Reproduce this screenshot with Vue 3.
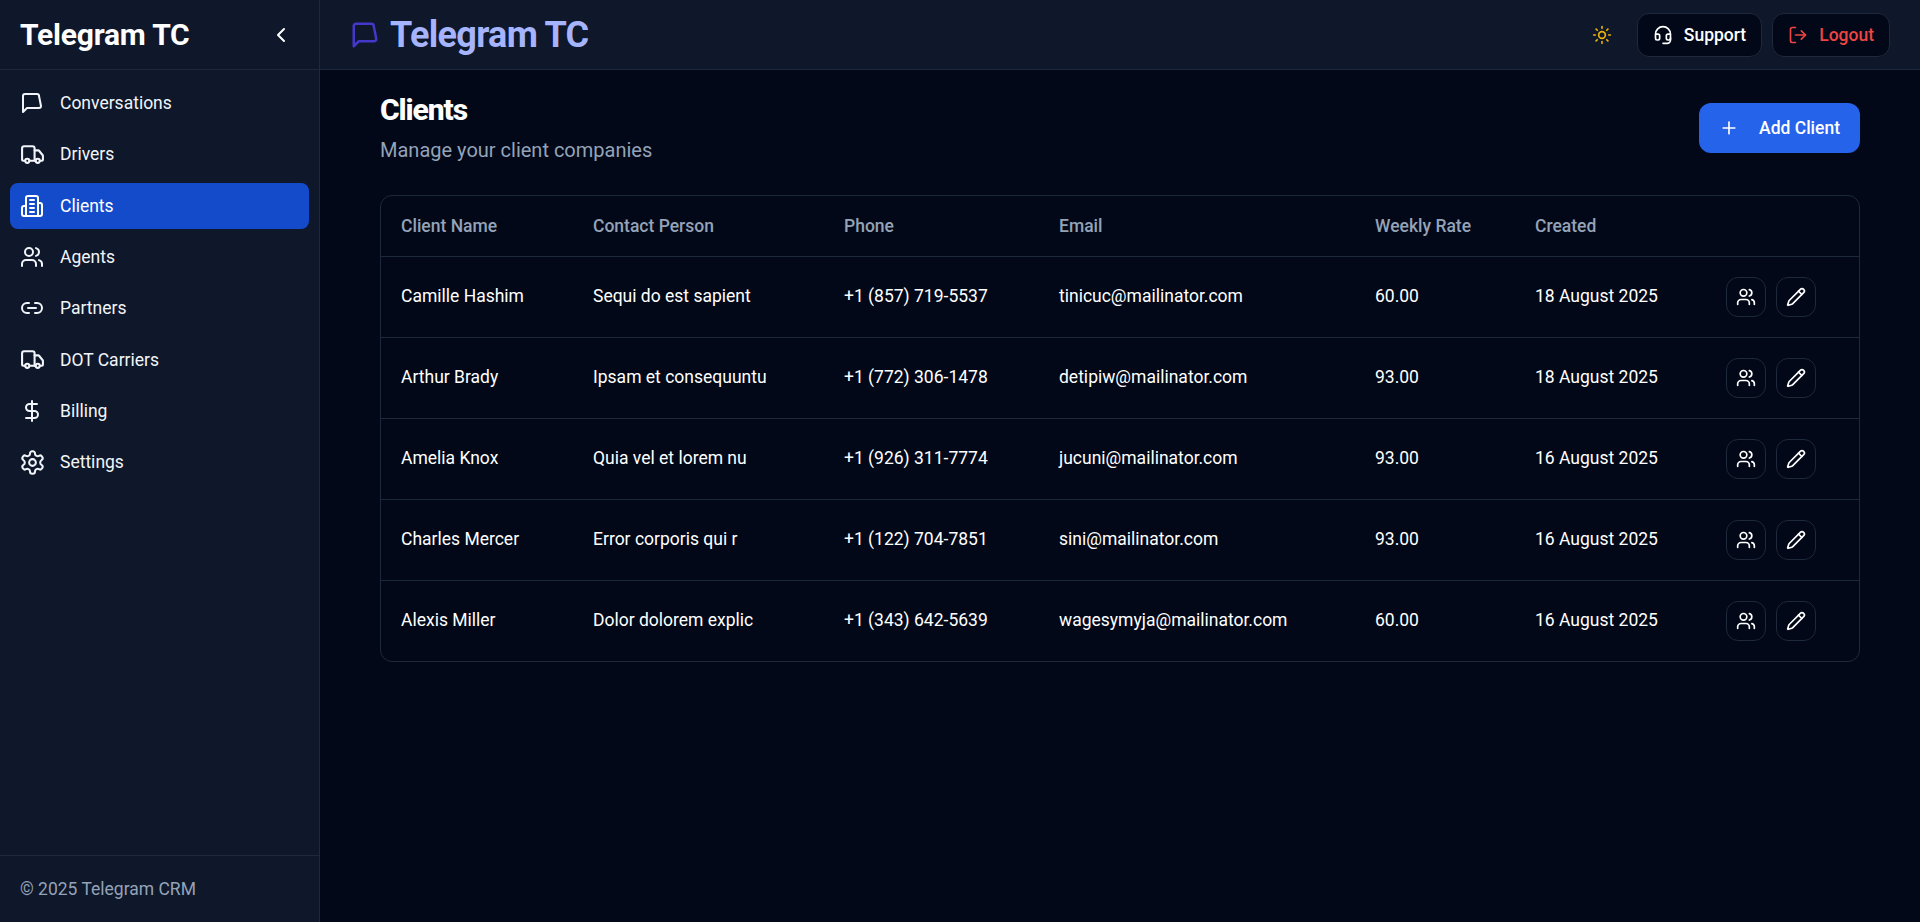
<script setup>
import { h } from 'vue'

const circle = (cx, cy, r) => `M${cx - r} ${cy}a${r} ${r} 0 1 0 ${2 * r} 0a${r} ${r} 0 1 0 ${-2 * r} 0`
const paths = {
  message: ['M21 15a2 2 0 0 1-2 2H7l-4 4V5a2 2 0 0 1 2-2h12a2 2 0 0 1 2 2z'],
  truck: ['M14 18V6a2 2 0 0 0-2-2H4a2 2 0 0 0-2 2v11a1 1 0 0 0 1 1h2', 'M15 18H9', 'M19 18h2a1 1 0 0 0 1-1v-3.65a1 1 0 0 0-.22-.624l-3.48-4.35A1 1 0 0 0 17.52 8H14', circle(17, 18, 2), circle(7, 18, 2)],
  building: ['M6 22V4a2 2 0 0 1 2-2h8a2 2 0 0 1 2 2v18Z', 'M6 12H4a2 2 0 0 0-2 2v6a2 2 0 0 0 2 2h2', 'M18 9h2a2 2 0 0 1 2 2v9a2 2 0 0 1-2 2h-2', 'M10 6h4', 'M10 10h4', 'M10 14h4', 'M10 18h4'],
  users: ['M16 21v-2a4 4 0 0 0-4-4H6a4 4 0 0 0-4 4v2', circle(9, 7, 4), 'M22 21v-2a4 4 0 0 0-3-3.87', 'M16 3.13a4 4 0 0 1 0 7.75'],
  link: ['M9 17H7A5 5 0 0 1 7 7h2', 'M15 7h2a5 5 0 1 1 0 10h-2', 'M8 12h8'],
  dollar: ['M12 2v20', 'M17 5H9.5a3.5 3.5 0 0 0 0 7h5a3.5 3.5 0 0 1 0 7H6'],
  settings: ['M12.22 2h-.44a2 2 0 0 0-2 2v.18a2 2 0 0 1-1 1.73l-.43.25a2 2 0 0 1-2 0l-.15-.08a2 2 0 0 0-2.73.73l-.22.38a2 2 0 0 0 .73 2.73l.15.1a2 2 0 0 1 1 1.72v.51a2 2 0 0 1-1 1.74l-.15.09a2 2 0 0 0-.73 2.73l.22.38a2 2 0 0 0 2.73.73l.15-.08a2 2 0 0 1 2 0l.43.25a2 2 0 0 1 1 1.73V20a2 2 0 0 0 2 2h.44a2 2 0 0 0 2-2v-.18a2 2 0 0 1 1-1.73l.43-.25a2 2 0 0 1 2 0l.15.08a2 2 0 0 0 2.73-.73l.22-.39a2 2 0 0 0-.73-2.73l-.15-.08a2 2 0 0 1-1-1.74v-.5a2 2 0 0 1 1-1.74l.15-.09a2 2 0 0 0 .73-2.73l-.22-.38a2 2 0 0 0-2.73-.73l-.15.08a2 2 0 0 1-2 0l-.43-.25a2 2 0 0 1-1-1.73V4a2 2 0 0 0-2-2z', circle(12, 12, 3)],
  headset: ['M3 11h3a2 2 0 0 1 2 2v3a2 2 0 0 1-2 2H5a2 2 0 0 1-2-2v-5Zm0 0a9 9 0 1 1 18 0m0 0v5a2 2 0 0 1-2 2h-1a2 2 0 0 1-2-2v-3a2 2 0 0 1 2-2h3Z', 'M21 16v2a4 4 0 0 1-4 4h-5'],
  logout: ['M9 21H5a2 2 0 0 1-2-2V5a2 2 0 0 1 2-2h4', 'M16 17l5-5-5-5', 'M21 12H9'],
  sun: [circle(12, 12, 4), 'M12 2v2', 'M12 20v2', 'm4.93 4.93 1.41 1.41', 'm17.66 17.66 1.41 1.41', 'M2 12h2', 'M20 12h2', 'm6.34 17.66-1.41 1.41', 'm19.07 4.93-1.41 1.41'],
  pencil: ['M21.174 6.812a1 1 0 0 0-3.986-3.987L3.842 16.174a2 2 0 0 0-.5.83l-1.321 4.352a.5.5 0 0 0 .623.622l4.353-1.32a2 2 0 0 0 .83-.497z', 'm15 5 4 4'],
  plus: ['M5 12h14', 'M12 5v14'],
  chevron: ['m15 18-6-6 6-6'],
}

const Icon = (props) =>
  h('svg', {
    width: props.size || 24, height: props.size || 24, viewBox: '0 0 24 24', fill: 'none',
    stroke: 'currentColor', 'stroke-width': props.sw || 2, 'stroke-linecap': 'round', 'stroke-linejoin': 'round',
    style: { flex: 'none', display: 'block' },
  }, paths[props.name].map((d) => h('path', { d })))
Icon.props = ['name', 'size', 'sw']

const nav = [
  { label: 'Conversations', icon: 'message', size: 24 },
  { label: 'Drivers', icon: 'truck', size: 25 },
  { label: 'Clients', icon: 'building', size: 24, active: true },
  { label: 'Agents', icon: 'users', size: 24 },
  { label: 'Partners', icon: 'link', size: 24 },
  { label: 'DOT Carriers', icon: 'truck', size: 25 },
  { label: 'Billing', icon: 'dollar', size: 24 },
  { label: 'Settings', icon: 'settings', size: 27, sw: 1.8 },
]

const columns = [
  { label: 'Client Name', width: 192 },
  { label: 'Contact Person', width: 251 },
  { label: 'Phone', width: 215 },
  { label: 'Email', width: 316 },
  { label: 'Weekly Rate', width: 160 },
  { label: 'Created', width: 191 },
  { label: '', width: 153 },
]

const rows = [
  ['Camille Hashim', 'Sequi do est sapient', '+1 (857) 719-5537', 'tinicuc@mailinator.com', '60.00', '18 August 2025'],
  ['Arthur Brady', 'Ipsam et consequuntu', '+1 (772) 306-1478', 'detipiw@mailinator.com', '93.00', '18 August 2025'],
  ['Amelia Knox', 'Quia vel et lorem nu', '+1 (926) 311-7774', 'jucuni@mailinator.com', '93.00', '16 August 2025'],
  ['Charles Mercer', 'Error corporis qui r', '+1 (122) 704-7851', 'sini@mailinator.com', '93.00', '16 August 2025'],
  ['Alexis Miller', 'Dolor dolorem explic', '+1 (343) 642-5639', 'wagesymyja@mailinator.com', '60.00', '16 August 2025'],
]
</script>

<template>
  <div class="app">
    <aside class="sidebar">
      <div class="side-head">
        <span class="side-title">Telegram TC</span>
        <button class="collapse"><Icon name="chevron" :size="24" /></button>
      </div>
      <nav class="nav">
        <a v-for="item in nav" :key="item.label" class="nav-item" :class="{ active: item.active }">
          <span class="nav-icon"><Icon :name="item.icon" :size="item.size" :sw="item.sw" /></span>
          <span>{{ item.label }}</span>
        </a>
      </nav>
      <div class="side-foot">© 2025 Telegram CRM</div>
    </aside>

    <div class="main">
      <header class="topbar">
        <div class="brand">
          <Icon class="brand-icon" name="message" :size="30" />
          <span class="brand-text">Telegram TC</span>
        </div>
        <div class="top-actions">
          <span class="sun"><Icon name="sun" :size="20" /></span>
          <button class="top-btn"><Icon name="headset" :size="20" /><span>Support</span></button>
          <button class="top-btn logout"><Icon name="logout" :size="20" /><span>Logout</span></button>
        </div>
      </header>

      <main class="content">
        <div class="page-head">
          <div>
            <h1>Clients</h1>
            <p>Manage your client companies</p>
          </div>
          <button class="add-btn"><Icon name="plus" :size="20" /><span>Add Client</span></button>
        </div>

        <div class="table-wrap">
          <table>
            <colgroup>
              <col v-for="c in columns" :key="c.label" :style="{ width: c.width + 'px' }" />
            </colgroup>
            <thead>
              <tr><th v-for="c in columns" :key="c.label">{{ c.label }}</th></tr>
            </thead>
            <tbody>
              <tr v-for="row in rows" :key="row[0]">
                <td v-for="cell in row" :key="cell" class="text-cell">{{ cell }}</td>
                <td>
                  <div class="row-actions">
                    <button class="icon-btn"><Icon name="users" :size="20" /></button>
                    <button class="icon-btn"><Icon name="pencil" :size="20" /></button>
                  </div>
                </td>
              </tr>
            </tbody>
          </table>
        </div>
      </main>
    </div>
  </div>
</template>

<style>
html, body { margin: 0; background: #020817; }
</style>

<style scoped>
.app {
  display: flex;
  height: 922px;
  overflow: hidden;
  background: #020817;
  color: #fff;
  font-family: Roboto, "Liberation Sans", sans-serif;
  font-size: 17.5px;
}
button { font-family: inherit; cursor: pointer; }

.sidebar {
  width: 320px;
  flex: none;
  display: flex;
  flex-direction: column;
  background: #0f172a;
  border-right: 1px solid #1e293b;
  box-sizing: border-box;
}
.side-head {
  height: 70px;
  box-sizing: border-box;
  border-bottom: 1px solid #1e293b;
  display: flex;
  align-items: center;
  justify-content: space-between;
  padding: 0 18px 0 20px;
}
.side-title { font-size: 30px; font-weight: 700; letter-spacing: -0.2px; }
.collapse {
  background: none;
  border: 0;
  padding: 0;
  color: #fff;
  width: 40px;
  height: 40px;
  display: flex;
  align-items: center;
  justify-content: center;
}
.nav {
  flex: 1;
  display: flex;
  flex-direction: column;
  gap: 5px;
  padding: 10px;
}
.nav-item {
  height: 46.3px;
  display: flex;
  align-items: center;
  gap: 16px;
  padding: 0 10px;
  border-radius: 8px;
  color: #f1f5f9;
}
.nav-item.active { background: #134bcb; color: #fff; }
.nav-icon {
  width: 24px;
  height: 24px;
  flex: none;
  display: flex;
  align-items: center;
  justify-content: center;
}
.side-foot {
  height: 67px;
  box-sizing: border-box;
  border-top: 1px solid #1e293b;
  padding: 0 20px;
  display: flex;
  align-items: center;
  color: #94a3b8;
}

.main { flex: 1; min-width: 0; display: flex; flex-direction: column; }
.topbar {
  height: 70px;
  box-sizing: border-box;
  flex: none;
  background: #0f172a;
  border-bottom: 1px solid #1e293b;
  display: flex;
  align-items: center;
  justify-content: space-between;
  padding: 0 30px;
}
.brand { display: flex; align-items: center; gap: 10px; }
.brand-icon { color: #4338ca; }
.brand-text { font-size: 36px; font-weight: 700; color: #a5b4fc; letter-spacing: -0.7px; }
.top-actions { display: flex; align-items: center; gap: 10px; }
.sun { color: #eab308; width: 50px; display: flex; justify-content: center; }
.top-btn {
  height: 44px;
  display: flex;
  align-items: center;
  gap: 11px;
  padding: 0 15px;
  background: #020817;
  border: 1px solid #1e293b;
  border-radius: 12px;
  color: #fff;
  font-size: 17.5px;
  font-weight: 500;
}
.top-btn.logout { color: #ef4444; }

.content { padding: 22px 60px 20px; }
.page-head {
  display: flex;
  justify-content: space-between;
  align-items: center;
  margin-bottom: 31px;
}
h1 { margin: 0; font-size: 30px; font-weight: 800; line-height: 36px; letter-spacing: -1.1px; }
p { margin: 8px 0 0; color: #94a3b8; font-size: 20px; line-height: 28px; }
.add-btn {
  height: 50px;
  display: flex;
  align-items: center;
  gap: 20px;
  padding: 0 20px;
  border: 0;
  border-radius: 12px;
  background: #2563eb;
  color: #fff;
  font-size: 17.5px;
  font-weight: 500;
}

.table-wrap { border: 1px solid #1e293b; border-radius: 12px; overflow: hidden; }
table { width: 100%; table-layout: fixed; border-collapse: collapse; }
th {
  height: 60px;
  padding: 0 20px;
  text-align: left;
  color: #94a3b8;
  font-size: 17.5px;
  font-weight: 500;
}
td {
  height: 80px;
  padding: 0 20px;
  border-top: 1px solid #1e293b;
  font-size: 17.5px;
  color: #fff;
}
td.text-cell { height: 78px; padding-bottom: 2px; }
.row-actions { display: flex; gap: 10px; }
.icon-btn {
  width: 40px;
  height: 40px;
  padding: 0;
  display: flex;
  align-items: center;
  justify-content: center;
  background: #020817;
  border: 1px solid #1e293b;
  border-radius: 12px;
  color: #fff;
}
</style>
